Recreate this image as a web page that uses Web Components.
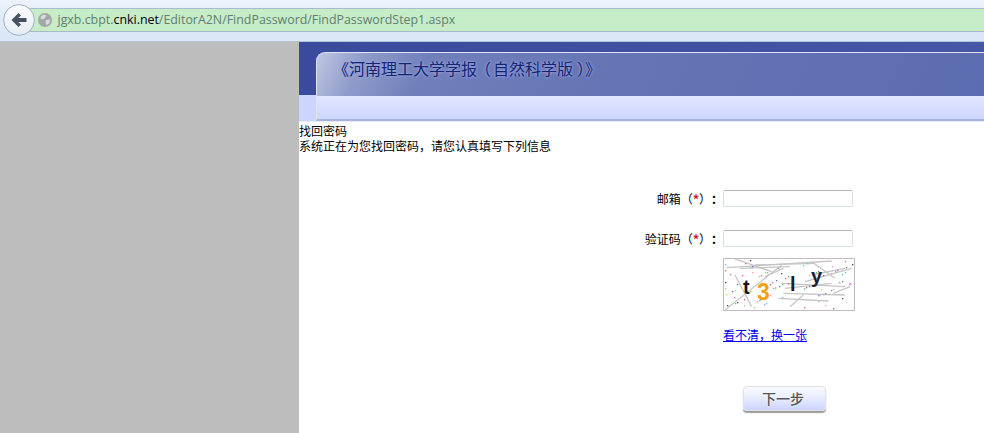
<!DOCTYPE html>
<html lang="zh">
<head>
<meta charset="utf-8">
<title>找回密码</title>
<style>
html,body{margin:0;padding:0;height:433px;overflow:hidden;background:#fff;font-family:"Noto Sans CJK SC","Liberation Sans",sans-serif}
body{display:flex;flex-direction:column}
</style>
</head>
<body>
<browser-bar url-host-a="jgxb.cbpt." url-host-b="cnki.net" url-path="/EditorA2N/FindPassword/FindPasswordStep1.aspx"></browser-bar>
<page-shell>
  <site-header>《河南理工大学学<span style="letter-spacing:-2px">报</span><span style="margin-right:2px">（</span>自然科学版<span style="margin-left:4px">）</span>》</site-header>
  <div style="font-family:'Liberation Sans','Noto Sans CJK SC',sans-serif;font-size:12px;line-height:15px;color:#000;padding-top:3px">找回密码<br>系统正在为您找回密码，请您认真填写下列信息</div>
  <find-form></find-form>
</page-shell>
<script>
function def(name, html, init){
  customElements.define(name, class extends HTMLElement{
    constructor(){super();this.attachShadow({mode:'open'}).innerHTML=html;}
    connectedCallback(){ if(init) init(this); }
  });
}
def('browser-bar',`<style>
:host{display:block;height:42px;box-sizing:border-box;background:linear-gradient(#edf3fd,#e7eff9 8px,#dbe8f7 32px,#d9e7f7);border-bottom:1px solid #b4c6dc;padding-top:8px;flex:none}
.url{height:24px;box-sizing:border-box;background:#c6ecc8;border-top:1px solid #a9bccf;border-bottom:1px solid #a5b9c6;margin-left:24px;display:flex;align-items:center;padding-left:14px;font:12.4px/20px "Open Sans","Liberation Sans",sans-serif;color:#5f7f70;white-space:nowrap;position:relative}
.globe{width:14px;height:14px;margin-right:5.5px;flex:none}
b{font-weight:400;color:#000}
.back{position:absolute;left:-21px;top:-5px;width:32px;height:32px}
</style>
<div class="url">
<svg class="back" viewBox="0 0 32 32"><defs><linearGradient id="g" x1="0" y1="0" x2="0" y2="1"><stop offset="0" stop-color="#fbfcfe"/><stop offset="1" stop-color="#e6ebf3"/></linearGradient></defs><circle cx="16" cy="16" r="15.4" fill="url(#g)" stroke="#9fb0c4"/><path d="M15.5 9 L8.5 16 L15.5 23 L18 20.6 L15.2 18 H23.5 V14 H15.2 L18 11.4 Z" fill="#46525f"/></svg>
<svg class="globe" viewBox="0 0 14 14"><circle cx="7" cy="7" r="7" fill="#a3a7a8"/><path d="M3 3.2 Q6 1 8 2.4 L7 5 L4.5 6.5 L2.5 5.5 Z M8 7 L12 6.5 L11.5 10 L8.5 12.2 L7.5 9.5 Z" fill="#d9dcdc"/></svg>
<span id="u"></span>
</div>`, el=>{
  const u=el.shadowRoot.getElementById('u');
  u.innerHTML=el.getAttribute('url-host-a')+'<b>'+el.getAttribute('url-host-b')+'</b>'+el.getAttribute('url-path');
});
def('page-shell',`<style>
:host{display:grid;grid-template-columns:299px 1fr;flex:1;min-height:0}
.side{background:#bdbdbd}
.main{background:#fff;min-width:0}
</style><div class="side"></div><div class="main"><slot></slot></div>`);
def('site-header',`<style>
:host{display:block;height:80px;box-sizing:border-box;padding:10px 0 0 17px;background:linear-gradient(#cbd5fd,#cbd5fd) left bottom/100% 26px no-repeat,linear-gradient(90deg,#3a4a9c,#4757a5);border-bottom:1px solid #e7ebff}
.glass{height:69px;box-sizing:border-box;border:1px solid #dfe3f4;border-right:0;border-bottom:2px solid #aab3d8;border-radius:9px 0 0 0;position:relative;overflow:hidden;
 background:linear-gradient(#e2e6ff,#cdd6fd) left bottom/100% 23px no-repeat,linear-gradient(115deg,#c0c7e3 0,#8f9bca 7%,#7180bb 16%,#6474b4 45%,#5c6cb0 100%);padding:3px 0 0 16px}
.t{font-size:16px;line-height:24px;color:#14246f;text-shadow:0 0 2px #8f9de0,0 0 3px #a6b2ea;white-space:nowrap}
</style><div class="glass"><div class="t"><slot></slot></div></div>`);
def('find-form',`<style>
:host{display:grid;grid-template-columns:424px 132px;grid-auto-rows:auto;font-size:12px;line-height:17px;color:#000;padding-top:35px}
.l{text-align:right;white-space:nowrap;height:17px;text-spacing-trim:space-all}
.req{color:#e0103c;font-weight:700;text-shadow:0 0 2px #ff8fb0}
.c{font-weight:700}
.i{width:130px;height:17px;box-sizing:border-box;border:1px solid #dbe1e9;border-top-color:#b4b6bd;border-radius:2px;background:#fff;display:block;padding:0;margin:0}
.gap{grid-column:1/-1;height:23px}
.cap{grid-column:2;margin-top:11px;height:53px}
.cap svg{display:block}
.lnk{grid-column:2;margin-top:15px;height:17px;line-height:17px;white-space:nowrap}
a{color:#00e}
.btn{grid-column:2;margin:43px 0 0 20px;width:83px;height:25px;box-sizing:border-box;border:1px solid #e2e2e4;border-radius:4px;background:linear-gradient(#f8f9fe,#ecefff 40%,#cbd4fd);box-shadow:0 2px 1px #9c9c9c;color:#555;font:14px/23px "Noto Sans CJK SC",sans-serif;font-weight:500;text-shadow:0 0 2px #fff;text-align:center;padding:0 3px 0 0}
</style>
<div class="l">邮箱（<span class="req">*</span>）<span class="c">：</span></div><input class="i" type="text" aria-label="邮箱">
<div class="gap"></div>
<div class="l">验证码（<span class="req">*</span>）<span class="c">：</span></div><input class="i" type="text" aria-label="验证码">
<div class="cap" id="cap"></div>
<div class="lnk"><a href="#">看不清，换一张</a></div>
<button class="btn" type="button">下一步</button>`, el=>{
  const c=el.shadowRoot.getElementById('cap');
  const raw=[[35,38,350,18],[55,10,170,50],[30,165,200,30],[60,60,110,155],[75,40,225,35],[150,65,205,40],[200,85,390,95],[205,115,390,120],[190,130,340,138],[225,155,265,120],[290,20,360,70],[390,40,290,60],[270,80,410,40],[120,30,300,25],[210,100,350,85],[355,115,405,95]];
  const lines=raw.map(l=>[l[0]/3-8,l[1]/3-3,l[2]/3-8,l[3]/3-3]);
  const cols=['#e66','#6c6','#66d','#d6d','#5cc','#cc5','#778','#f9a','#9af','#8d8','#447'];
  let dots='',s=17;
  for(let i=0;i<85;i++){s=(s*73+41)%1009;const x=2+s%128;s=(s*73+41)%1009;const y=2+s%49;dots+=`<rect x="${x}" y="${y}" width="1.3" height="1.3" fill="${cols[i%cols.length]}"/>`;}
  c.innerHTML=`<svg width="132" height="53" viewBox="0 0 132 53" xmlns="http://www.w3.org/2000/svg">
<rect x=".5" y=".5" width="131" height="52" fill="#fff" stroke="#c2bcc2"/>
${lines.map(l=>`<line x1="${l[0]}" y1="${l[1]}" x2="${l[2]}" y2="${l[3]}" stroke="#c6c6c6" stroke-width="1.3"/>`).join('')}
${dots}
<g font-family="'Liberation Sans',sans-serif" font-weight="700">
<text x="20" y="36" font-size="20" fill="#151515">t</text>
<text x="34" y="42" font-size="23" fill="#f5a10f">3</text>
<text x="67" y="33" font-size="20" fill="#1a2030">l</text>
<text x="88" y="25" font-size="20" fill="#1b2233">y</text>
</g></svg>`;
});
</script>
</body>
</html>
